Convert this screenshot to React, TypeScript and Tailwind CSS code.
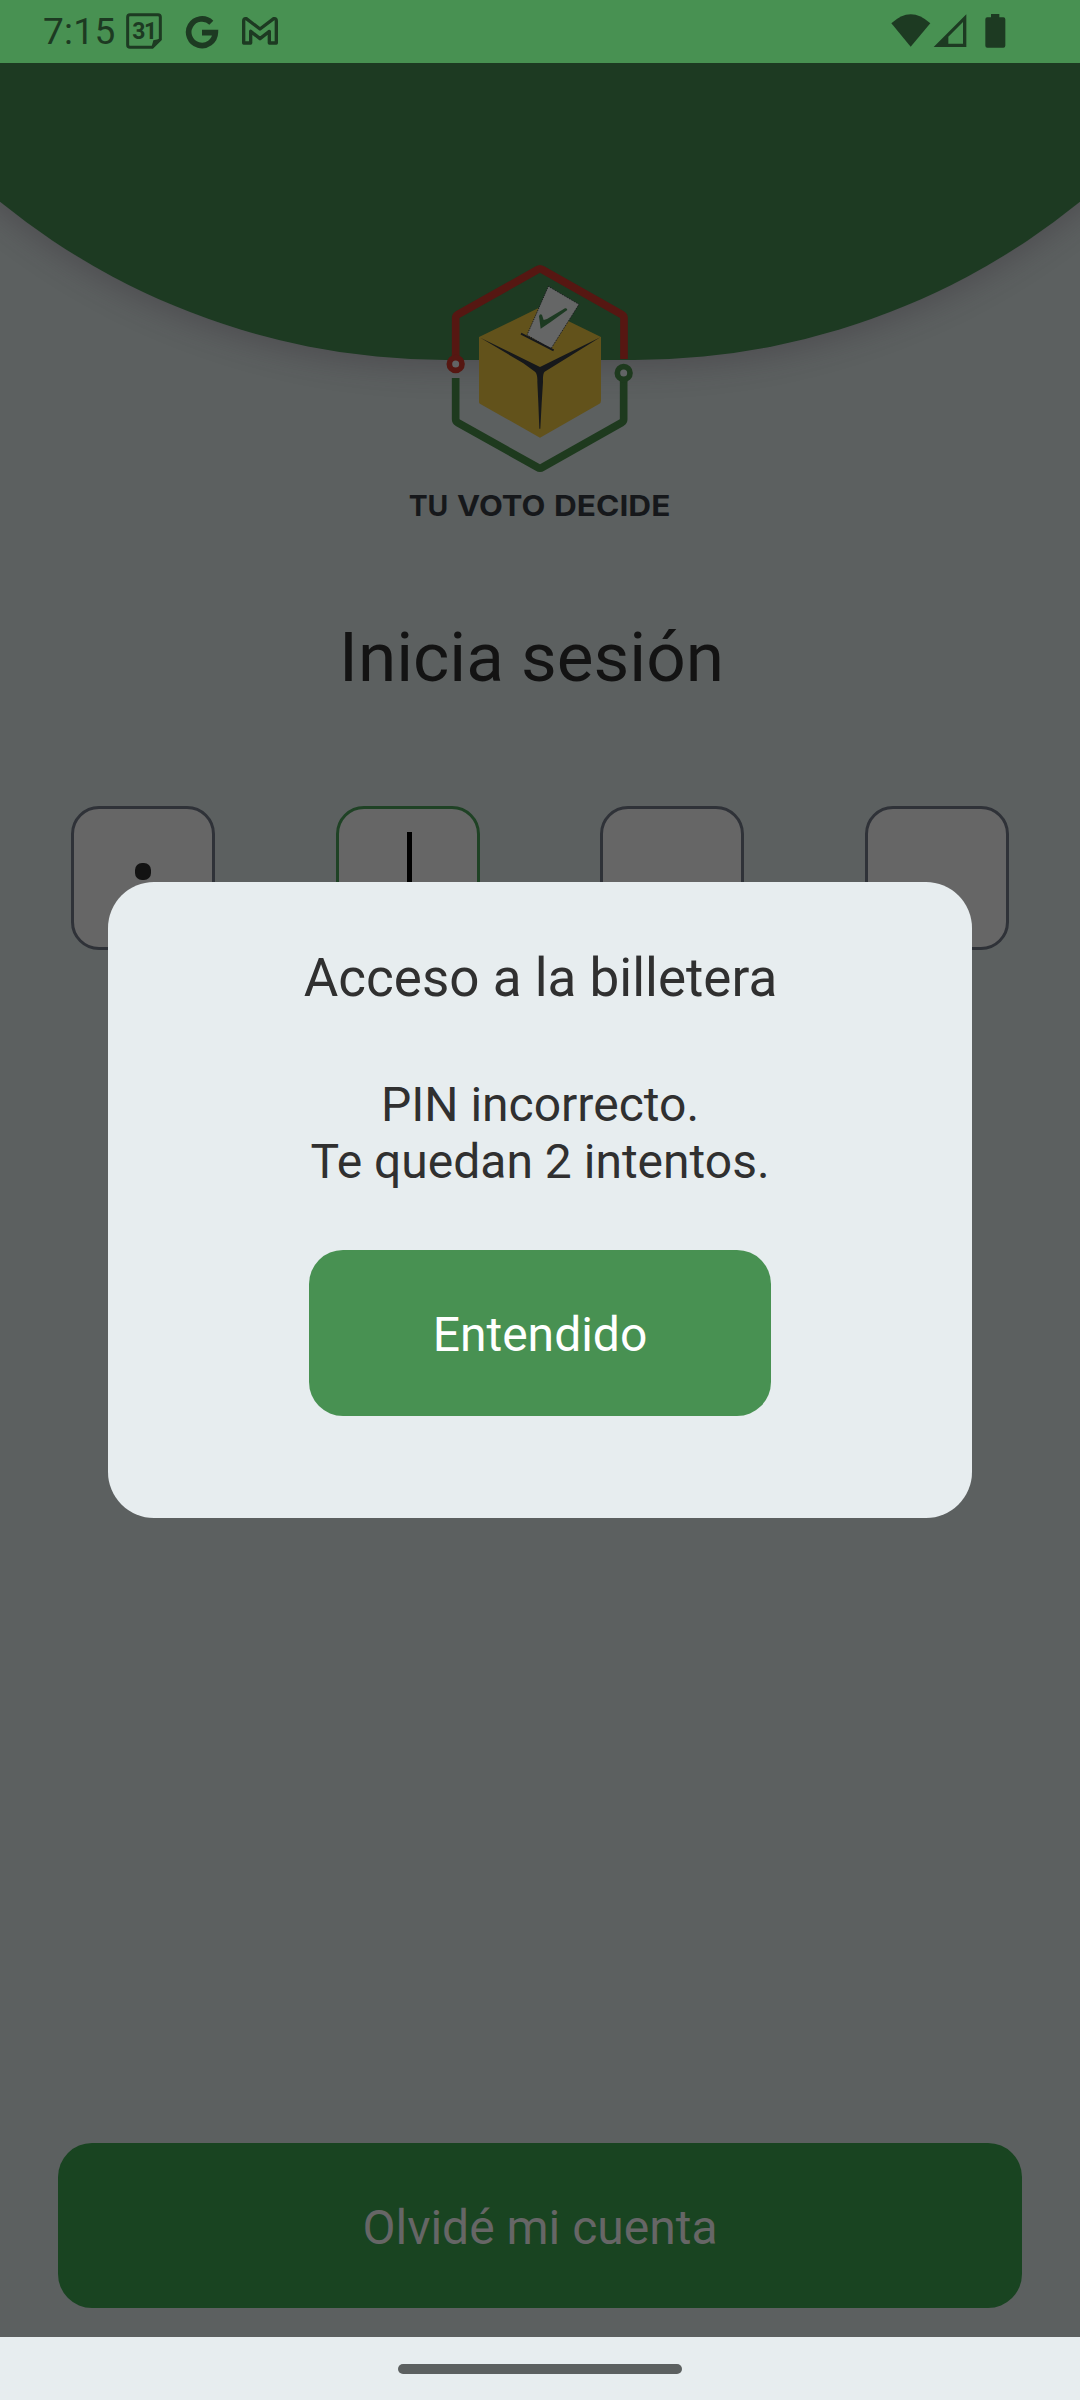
function CalendarIcon() {
  return (
    <div className="relative flex h-9 w-9 items-center justify-center">
      <svg className="absolute inset-0" width="36" height="36" viewBox="0 0 108 108" fill="none">
        <path d="M12 5H96Q103 5 103 12V79L79 103H12Q5 103 5 96V12Q5 5 12 5Z" stroke="#1d3a22" strokeWidth="9" />
        <path d="M76 104L82 82L104 77V82L82 104Z" fill="#1d3a22" />
      </svg>
      <span className="relative text-[23px] leading-none font-bold tracking-[-1.5px]">31</span>
    </div>
  );
}

function GoogleIcon() {
  return (
    <svg width="34" height="34" viewBox="0 0 102 102" fill="none">
      <path d="M79 23A40 40 0 1 0 91 53H51" stroke="#1d3a22" strokeWidth="17" />
    </svg>
  );
}

function MailIcon() {
  return (
    <svg width="36" height="28" viewBox="0 0 108 84" fill="none">
      <path
        d="M5 78V12Q5 4 13 5L54 36L95 5Q103 4 103 12V78H82V43L54 65L26 43V78Z"
        stroke="#1d3a22"
        strokeWidth="10"
        strokeLinejoin="round"
      />
    </svg>
  );
}

function StatusBar() {
  return (
    <div className="flex h-[63px] shrink-0 items-start bg-[#489152] text-[#1d3a22]">
      <span className="ml-[43px] mt-[10px] w-[83px] text-[37px] leading-[43px] tracking-[0.3px]">7:15</span>
      <div className="mt-[13px]">
        <CalendarIcon />
      </div>
      <div className="ml-[23px] mt-[15px]">
        <GoogleIcon />
      </div>
      <div className="ml-[23px] mt-[17px]">
        <MailIcon />
      </div>
      <svg className="ml-auto mr-[74px] mt-[14px]" width="115" height="34" viewBox="92 42 345 102" fill="#1d3a22">
        <path d="M93 70Q151 15 210 70L151 140Z" />
        <path fillRule="evenodd" d="M220 141L318 43V141ZM264 110V131H308V66Z" />
        <path d="M392 42H417V52H429Q435 52 435 58V137Q435 143 429 143H381Q375 143 375 137V58Q375 52 381 52H392Z" />
      </svg>
    </div>
  );
}

const logoWords = [
  { text: "TU", x: 26, length: 119 },
  { text: "VOTO", x: 171, length: 265 },
  { text: "DECIDE", x: 462, length: 349 },
];

function Logo() {
  return (
    <svg className="relative mt-[177px] shrink-0" width="280" height="300" viewBox="0 0 840 900" fill="none">
      <g strokeWidth="23" strokeLinejoin="round">
        <path d="M167 350V234Q167 228 173 224L413 89Q420 84 427 89L666 224Q672 228 672 234V357" stroke="#561712" />
        <path d="M167 414V538Q167 544 173 548L413 682Q420 687 427 682L665 548Q671 544 671 538V420" stroke="#1e3a1e" />
      </g>
      <circle cx="167" cy="372" r="19" fill="#626465" stroke="#561712" strokeWidth="17" />
      <circle cx="671" cy="399" r="19" fill="#626465" stroke="#1e3a1e" strokeWidth="17" />
      <path d="M237 291L420 202L603 291V482Q603 489 597 492L420 593L241 492Q237 490 237 486Z" fill="#62521b" />
      <path
        d="M241 293L420 381L601 292L434 395Q428 400 429 425L425 490L421 566H418L415 490L412 425Q413 402 405 395L370 370Z"
        fill="#16181b"
      />
      <path d="M445 139L537 193L453 326L381 285Z" fill="#656666" stroke="#16181b" strokeWidth="3" strokeDasharray="3 3" />
      <path d="M363 281L461 331" stroke="#16181b" strokeWidth="6" />
      <path d="M417 228Q421 220 426 225L431 240L441 237L495 205Q501 203 502 210L452 246L422 266Z" fill="#1d3a22" />
      {logoWords.map((word) => (
        <text
          key={word.text}
          x={word.x}
          y="827"
          textLength={word.length}
          lengthAdjust="spacingAndGlyphs"
          fontSize="84"
          className="fill-[#16181b] font-[Inter,sans-serif] font-bold"
        >
          {word.text}
        </text>
      ))}
    </svg>
  );
}

function PinInputs() {
  const box = "flex h-36 w-36 justify-center rounded-[28px] border-[3px] bg-[#666666]";
  return (
    <div className="mt-[108px] flex w-[938px] justify-between">
      <div className={`${box} border-[#2f3238]`}>
        <span className="mt-[54px] h-[17px] w-4 rounded-[7px] bg-[#131313]" />
      </div>
      <div className={`${box} border-[#1f4225]`}>
        <span className="ml-[3px] mt-[23px] h-[88px] w-[5px] bg-black" />
      </div>
      <div className={`${box} border-[#2f3238]`} />
      <div className={`${box} border-[#2f3238]`} />
    </div>
  );
}

function AccessDialog() {
  return (
    <div className="absolute inset-0 flex items-center justify-center">
      <div className="flex h-[636px] w-[864px] flex-col items-center rounded-[46px] bg-[#e7edef] pt-[65px] text-center text-[#303030]">
        <h2 className="pl-px text-[53px] leading-[62px]">Acceso a la billetera</h2>
        <p className="mt-[67px] text-5xl leading-[57px]">
          PIN incorrecto.
          <br />
          Te quedan 2 intentos.
        </p>
        <button className="mt-[60px] flex h-[166px] w-[462px] justify-center rounded-[34px] bg-[#489152] pt-14 text-5xl leading-[57px] text-white">
          Entendido
        </button>
      </div>
    </div>
  );
}

export default function App() {
  return (
    <div className="relative flex h-[2400px] w-[1080px] flex-col overflow-hidden bg-[#e7edef] font-[Roboto,sans-serif]">
      <StatusBar />
      <main className="relative flex grow flex-col items-center overflow-hidden bg-[#5c6060]">
        <div className="absolute -left-[262px] -top-[411px] h-[708px] w-[1604px] rounded-b-[708px] bg-[#1d3a22] shadow-[0_8px_30px_rgba(50,40,50,0.32)]" />
        <Logo />
        <h1 className="mt-[77px] pr-[17px] text-[69.3px] leading-[81px] text-[#131313]">Inicia sesión</h1>
        <PinInputs />
        <button className="mb-[29px] mt-auto flex h-[165px] w-[964px] shrink-0 justify-center rounded-[34px] bg-[#194421] pt-14 text-5xl leading-[57px] text-[#666666]">
          Olvidé mi cuenta
        </button>
      </main>
      <div className="flex h-[63px] shrink-0 justify-center pt-[27px]">
        <div className="h-[10px] w-[284px] rounded-full bg-[#5c6060]" />
      </div>
      <AccessDialog />
    </div>
  );
}
